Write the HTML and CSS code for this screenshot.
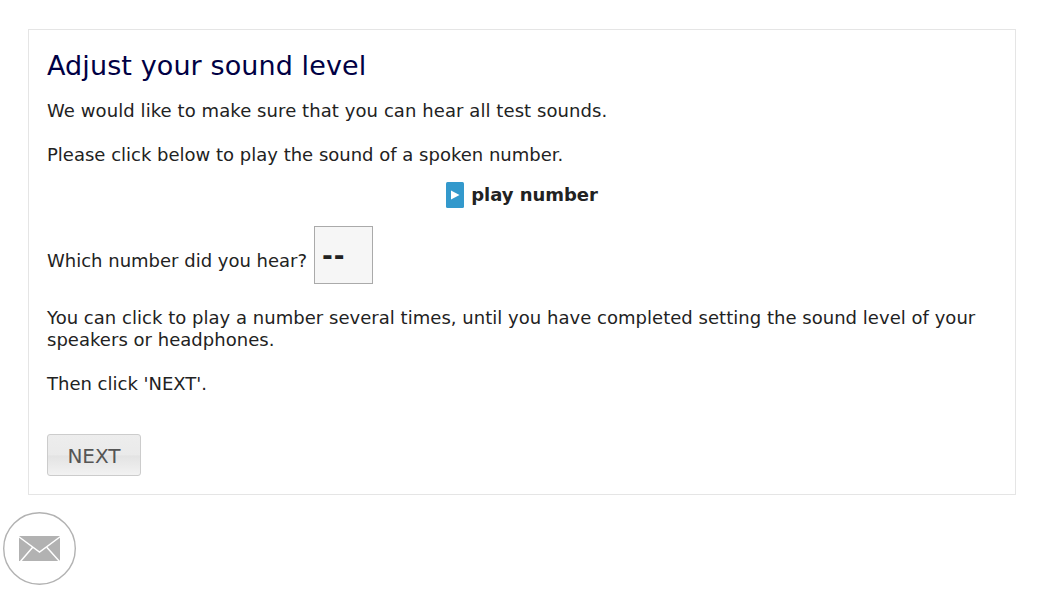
FILE: index.html
```html
<!DOCTYPE html>
<html lang="en">
<head>
    <meta charset="UTF-8">
    <meta name="viewport" content="width=device-width, initial-scale=1.0">
    <title>Adjust your sound level</title>
    <link rel="stylesheet" href="styles.css">
</head>
<body>
    <div class="container">
        <h1>Adjust your sound level</h1>
        <p class="lead">We would like to make sure that you can hear all test sounds.</p>
        <p class="intro">Please click below to play the sound of a spoken number.</p>

        <div class="player">
            <button class="play" type="button">
                <svg class="play-icon" width="18" height="26" viewBox="0 0 18 26">
                    <rect width="18" height="26" rx="1.5" fill="#3399cc"/>
                    <path d="M5 8.5l8.5 4.5L5 17.500z" fill="#fff"/>
                </svg>
                <span class="play-label">play number</span>
            </button>
        </div>

        <div class="question">
            <label for="answer">Which number did you hear?</label>
            <select id="answer" class="answer">
                <option>--</option>
                <option>1</option>
                <option>2</option>
                <option>3</option>
            </select>
        </div>

        <p class="hint">You can click to play a number several times, until you have completed setting the sound level of your speakers or headphones.</p>
        <p>Then click 'NEXT'.</p>

        <button class="next" type="button">NEXT</button>
    </div>

    <a class="contact" href="#" aria-label="Contact">
        <svg width="74" height="74" viewBox="0 0 74 74">
            <circle cx="36.500" cy="36.500" r="35.800" fill="#fff" stroke="#b2b2b2" stroke-width="1.400"/>
            <rect x="16" y="24" width="41" height="25" fill="#b2b2b2"/>
            <path d="M15.500 24.500l21 15.500 21-15.500M17 50l12.500-14.500M57 50L44 35.500" fill="none" stroke="#fff" stroke-width="1.500"/>
        </svg>
    </a>
</body>
</html>
```

FILE: styles.css
```css
* {
    box-sizing: border-box;
}
body {
    margin: 0;
    background-color: #fff;
    color: #222;
    font-family: Verdana, "DejaVu Sans", sans-serif;
    font-size: 18px;
    line-height: 22px;
}
.container {
    width: 988px;
    height: 466px;
    margin: 29px 0 0 28px;
    padding: 19px 18px 18px;
    border: 1px solid #e5e5e5;
}
h1 {
    margin: 0 0 17px;
    color: #000044;
    font-size: 27px;
    font-weight: normal;
    line-height: 34px;
    letter-spacing: 0.1px;
}
p {
    margin: 0 0 22px;
}
.lead {
    letter-spacing: 0.08px;
}
.intro {
    margin-bottom: 16px;
}
.hint {
    letter-spacing: 0.03px;
}
.player {
    display: flex;
    justify-content: center;
}
.play {
    display: flex;
    align-items: center;
    gap: 7px;
    padding: 0;
    border: none;
    background: none;
    color: #222;
    font: bold 18px Verdana, "DejaVu Sans", sans-serif;
    cursor: pointer;
}
.play-label {
    margin-bottom: 2px;
    letter-spacing: -0.05px;
}
.question {
    display: flex;
    gap: 7px;
    height: 58px;
    margin: 18px 0 23px;
}
.question label {
    margin-top: 24px;
}
.answer {
    appearance: none;
    width: 59px;
    height: 58px;
    padding: 2px 7px 0;
    border: 1px solid #aaa;
    border-radius: 0;
    background-color: #f6f6f6;
    color: #222;
    font: bold 26px Verdana, "DejaVu Sans", sans-serif;
    letter-spacing: 1px;
}
.next {
    width: 94px;
    height: 42px;
    margin-top: 17px;
    padding: 1px 0 0;
    border: 1px solid #ccc;
    border-radius: 3px;
    background: linear-gradient(#ededed, #eaeaea 50%, #e3e3e3 52%, #f2f2f2);
    color: #555;
    font: 20px Verdana, "DejaVu Sans", sans-serif;
}
.contact {
    display: block;
    width: 74px;
    height: 74px;
    margin: 17px 0 0 3px;
}
```
